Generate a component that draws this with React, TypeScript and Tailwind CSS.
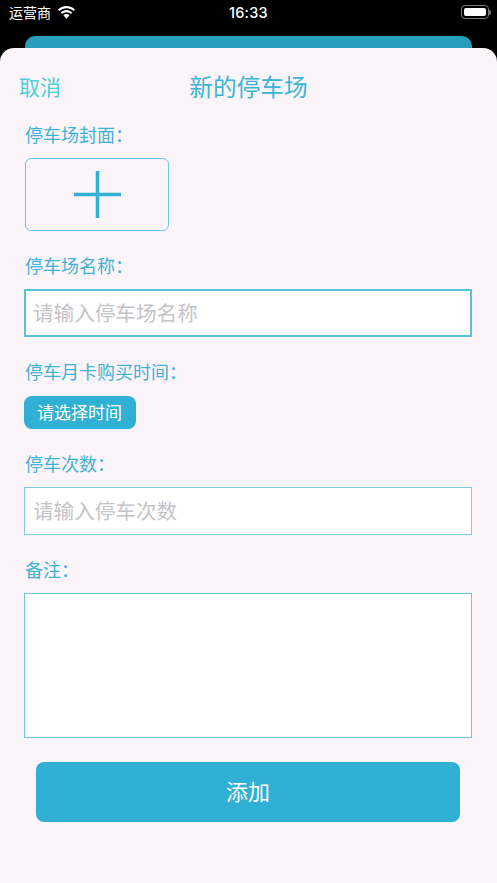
import React from "react";

const font = { fontFamily: '"Noto Sans CJK SC", "Noto Sans", sans-serif' };

function Label({ text, className }: { text: string; className: string }) {
  return <div className={`text-[18px] leading-[24px] text-[#3fb2d5] font-normal pl-[25px] ${className}`}>{text}</div>;
}

export default function App() {
  return (
    <div className="w-[497px] h-[883px] bg-black overflow-hidden flex flex-col" style={font}>
      <div className="h-[36px] relative shrink-0 flex items-start text-white">
        <div className="flex items-center pl-[9px] gap-[6px] h-[25px]">
          <span className="text-[14px] leading-[25px]">运营商</span>
          <svg width="19" height="14" viewBox="0 0 19 14">
            <path d="M9.5 2.2c2.8 0 5.3 1.1 7.2 2.9l1.3-1.5C15.8 1.4 12.8 0 9.5 0S3.200 1.400 1 3.600l1.300 1.500C4.200 3.300 6.700 2.200 9.500 2.200z" fill="#fff" />
            <path d="M9.500 6.200c1.700 0 3.200.7 4.400 1.800l1.300-1.500C13.700 5 11.700 4 9.500 4S5.300 5 3.800 6.500L5.100 8C6.300 6.900 7.800 6.200 9.500 6.200z" fill="#fff" />
            <path d="M9.500 8c-1.200 0-2.300.5-3.100 1.200l3.100 3.600 3.100-3.600C11.800 8.500 10.700 8 9.500 8z" fill="#fff" />
          </svg>
        </div>
        <span className="absolute left-[229px] top-0 text-[14.5px] leading-[26px] font-medium tracking-[0.2px]" style={{ fontFamily: '"Inter", sans-serif' }}>16:33</span>
        <div className="absolute left-[461px] top-[5px] flex items-center">
          <div className="w-[28px] h-[14px] rounded-[4px] border border-[#777] p-[2px]">
            <div className="w-full h-full bg-white rounded-[2px]" />
          </div>
          <div className="w-[2px] h-[5px] bg-[#777] rounded-r-[2px]" />
        </div>
      </div>

      <div className="h-[12px] shrink-0 mx-[25px] bg-[#299ebc] rounded-t-[10px]" />

      <div className="flex-1 bg-[#fbf4f9] rounded-t-[14px] flex flex-col">
        <div className="relative h-[30px] mt-[23px] shrink-0">
          <span className="absolute left-[19px] top-0 text-[21px] leading-[30px] font-normal text-[#4ccfd6]">取消</span>
          <div className="text-center text-[23.7px] leading-[30px] font-normal text-[#3ab5d8]">新的停车场</div>
        </div>

        <Label text="停车场封面：" className="mt-[21px]" />
        <div className="ml-[25px] mt-[12px] w-[144px] h-[73px] rounded-[6px] border border-[#6cc6e2] flex items-center justify-center shrink-0">
          <svg width="47" height="47" viewBox="0 0 47 47">
            <rect x="0" y="21.75" width="47" height="3.5" fill="#30b0d4" />
            <rect x="21.75" y="0" width="3.5" height="47" fill="#30b0d4" />
          </svg>
        </div>

        <Label text="停车场名称：" className="mt-[22px]" />
        <div className="ml-[24px] mt-[12px] w-[448px] h-[48px] bg-white border-2 border-[#58c2df] flex items-center pl-[7px] pb-[2px] shrink-0">
          <span className="text-[20.6px] font-normal text-[#c4c4c6]">请输入停车场名称</span>
        </div>

        <Label text="停车月卡购买时间：" className="mt-[22px]" />
        <div className="ml-[24px] mt-[13px] w-[112px] h-[33px] rounded-[8px] bg-[#2fb0d4] flex items-center justify-center pb-[2px] pr-[1px] shrink-0">
          <span className="text-[17px] font-normal text-white">请选择时间</span>
        </div>

        <Label text="停车次数：" className="mt-[22px]" />
        <div className="ml-[24px] mt-[12px] w-[448px] h-[48px] bg-white border border-[#7fcde4] flex items-center pl-[8px] pb-[2px] shrink-0">
          <span className="text-[20.6px] font-normal text-[#c4c4c6]">请输入停车次数</span>
        </div>

        <Label text="备注：" className="mt-[22px]" />
        <div className="ml-[24px] mt-[12px] w-[448px] h-[145px] bg-white border border-[#70c8e0] shrink-0" />

        <div className="ml-[36px] mt-[24px] w-[424px] h-[60px] rounded-[8px] bg-[#2fb0d4] flex items-center justify-center pb-[4px] shrink-0">
          <span className="text-[22px] font-normal text-white">添加</span>
        </div>
      </div>
    </div>
  );
}
